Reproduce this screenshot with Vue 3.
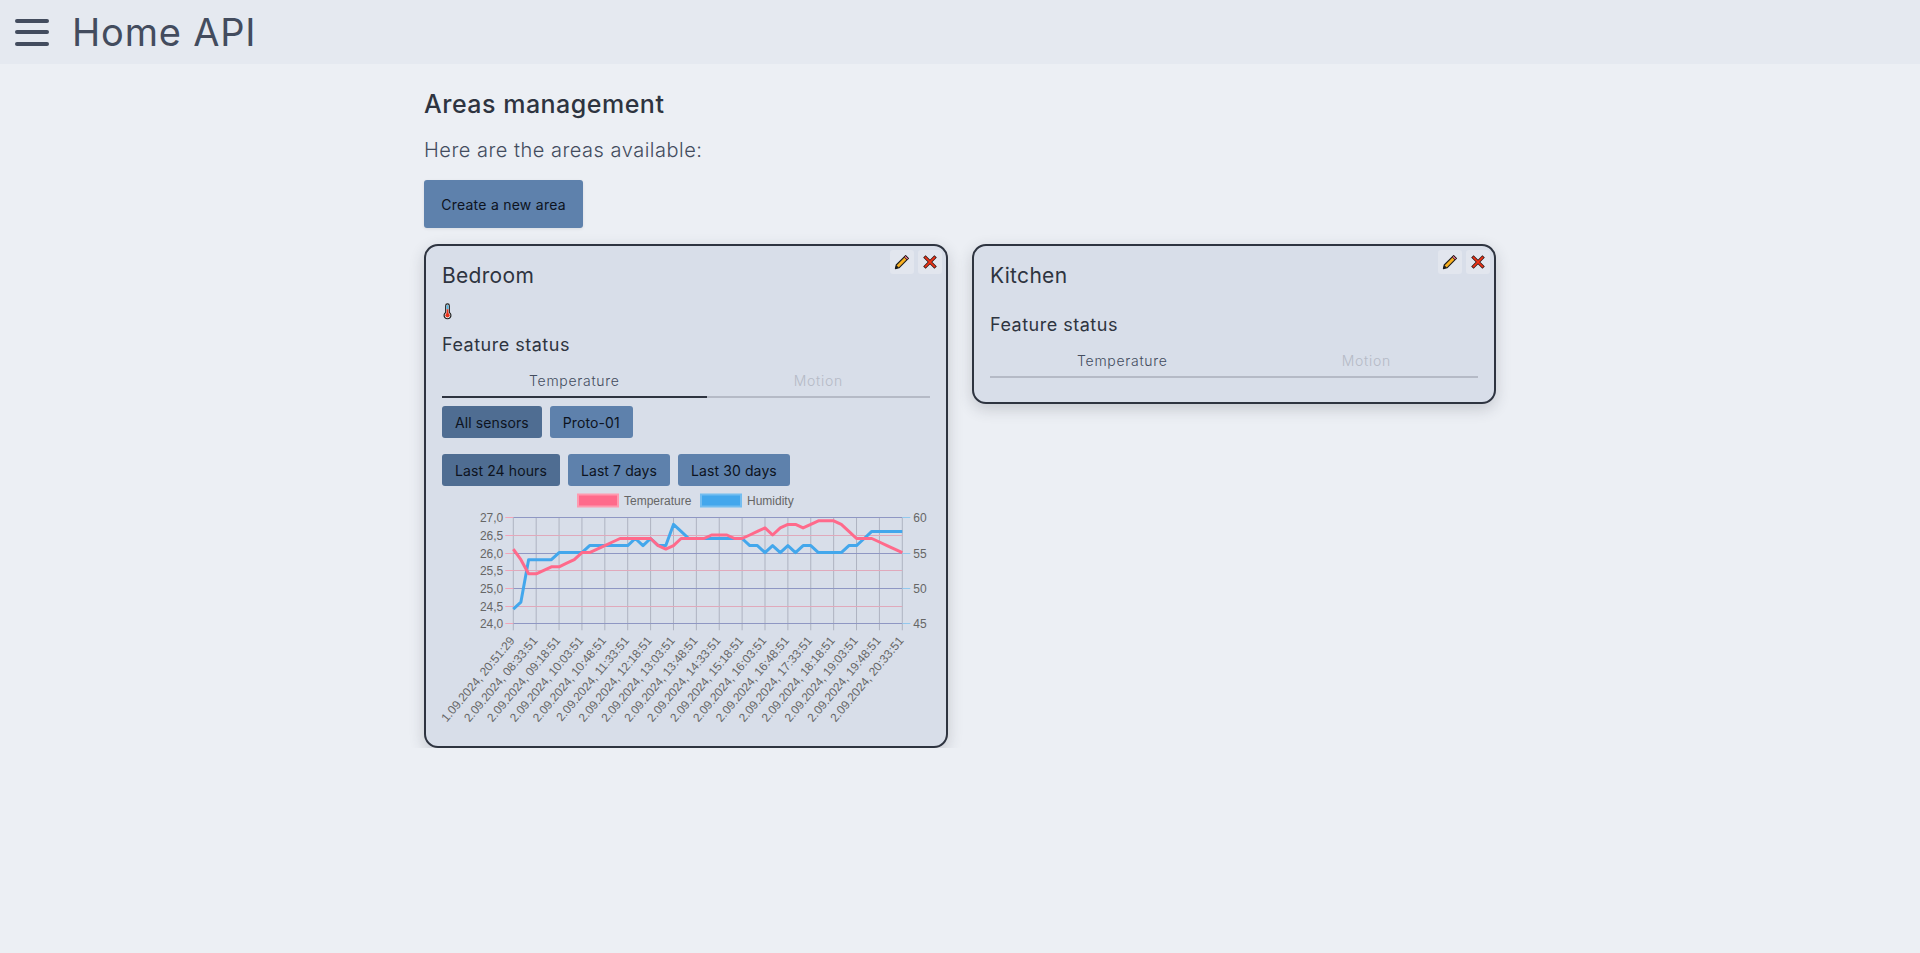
<script setup>
const areas = [
  { name: 'Bedroom', chart: true },
  { name: 'Kitchen', chart: false }
]
const sensors = ['All sensors', 'Proto-01']
const ranges = ['Last 24 hours', 'Last 7 days', 'Last 30 days']

// chart geometry, in canvas pixels
const left = 71.3
const right = 460.3
const top = 33.3
const bottom = 139.3

const temperature = [26.1, 25.8, 25.4, 25.4, 25.5, 25.6, 25.6, 25.7, 25.8, 26, 26, 26.1, 26.2, 26.3, 26.4, 26.4, 26.4, 26.4, 26.4, 26.2, 26.1, 26.2, 26.4, 26.4, 26.4, 26.4, 26.5, 26.5, 26.5, 26.4, 26.4, 26.5, 26.6, 26.7, 26.5, 26.7, 26.8, 26.8, 26.7, 26.8, 26.9, 26.9, 26.9, 26.8, 26.6, 26.4, 26.4, 26.4, 26.3, 26.2, 26.1, 26]
const humidity = [47, 48, 54, 54, 54, 54, 55, 55, 55, 55, 56, 56, 56, 56, 56, 56, 57, 56, 57, 56, 56, 59, 58, 57, 57, 57, 57, 57, 57, 57, 57, 56, 56, 55, 56, 55, 56, 55, 56, 56, 55, 55, 55, 55, 56, 56, 57, 58, 58, 58, 58, 58]

const stepX = (right - left) / 51
const points = (data, min, max) => data
  .map((v, i) => `${(left + i * stepX).toFixed(1)},${(bottom - ((v - min) / (max - min)) * (bottom - top)).toFixed(1)}`)
  .join(' ')
const tempLine = points(temperature, 24, 27)
const humLine = points(humidity, 45, 60)

const times = ['08:33:51', '09:18:51', '10:03:51', '10:48:51', '11:33:51', '12:18:51', '13:03:51', '13:48:51', '14:33:51', '15:18:51', '16:03:51', '16:48:51', '17:33:51', '18:18:51', '19:03:51', '19:48:51', '20:33:51']
const xLabels = ['1.09.2024, 20:51:29', ...times.map((t) => `2.09.2024, ${t}`)]
const xTicks = xLabels.map((label, i) => ({ label, x: left + i * 3 * stepX }))

const leftTicks = ['27,0', '26,5', '26,0', '25,5', '25,0', '24,5', '24,0'].map((label, i) => ({
  label,
  y: Math.round(top + (i * (bottom - top)) / 6) + 0.5,
  shared: i % 2 === 0
}))
const rightTicks = ['60', '55', '50', '45'].map((label, i) => ({
  label,
  y: Math.round(top + (i * (bottom - top)) / 3) + 0.5
}))
</script>

<template>
  <header class="topbar">
    <button class="burger" aria-label="Menu">
      <span></span><span></span><span></span>
    </button>
    <h1>Home API</h1>
  </header>

  <main class="content">
    <h2>Areas management</h2>
    <p class="lead">Here are the areas available:</p>
    <button class="btn create">Create a new area</button>

    <section class="cards">
      <article v-for="area in areas" :key="area.name" class="card">
        <div class="actions">
          <button class="action" aria-label="Edit">
            <svg width="16" height="16" viewBox="0 0 16 16">
              <path d="M11.6 1.6 14.4 4.4 5 13.8 1.4 14.6 2.2 11Z" fill="#f9b020" stroke="#1d1d1d" stroke-width="1.1" stroke-linejoin="round" />
              <path d="M11.6 1.6 14.4 4.4 13 5.8 10.2 3Z" fill="#e8708a" stroke="#1d1d1d" stroke-width=".9" />
              <path d="M2.2 11 5 13.8 1.4 14.6Z" fill="#1d1d1d" />
            </svg>
          </button>
          <button class="action" aria-label="Delete">
            <svg width="16" height="16" viewBox="0 0 16 16">
              <path d="M3.6 3.6 12.4 12.4M12.4 3.6 3.6 12.4" stroke="#2a1512" stroke-width="3.4" stroke-linecap="square" />
              <path d="M3.6 3.6 12.4 12.4M12.4 3.6 3.6 12.4" stroke="#ee3418" stroke-width="1.9" stroke-linecap="square" />
            </svg>
          </button>
        </div>

        <h3 class="area-name">{{ area.name }}</h3>

        <div class="feature-icons" :class="{ empty: !area.chart }">
          <svg v-if="area.chart" width="9" height="17" viewBox="0 0 10 18">
            <path d="M3 2.5a2 2 0 0 1 4 0V10a3.8 3.8 0 1 1-4 0Z" fill="#eef1f5" stroke="#1d1d1d" stroke-width="1.3" />
            <rect x="4.1" y="2" width="1.8" height="4.5" fill="#4db4e6" />
            <rect x="4.1" y="6.5" width="1.8" height="5" fill="#e8321a" />
            <circle cx="5" cy="13.2" r="2.4" fill="#e8321a" />
          </svg>
        </div>

        <h4 class="feature-title">Feature status</h4>

        <div class="tabs" :class="{ selected: area.chart }">
          <div class="tab first">Temperature</div>
          <div class="tab muted">Motion</div>
        </div>

        <template v-if="area.chart">
          <div class="btn-row">
            <button v-for="(s, i) in sensors" :key="s" class="btn small" :class="{ active: i === 0 }">{{ s }}</button>
          </div>
          <div class="btn-row">
            <button v-for="(r, i) in ranges" :key="r" class="btn small" :class="{ active: i === 0 }">{{ r }}</button>
          </div>

          <svg class="chart" width="488" height="244" viewBox="0 0 488 244">
            <!-- legend -->
            <rect x="136" y="10.5" width="40" height="12" fill="#ff6a8b" stroke="#ff9ab0" stroke-width="2" />
            <text x="182" y="20.5" class="tick">Temperature</text>
            <rect x="259" y="10.5" width="40" height="12" fill="#43a7ec" stroke="#73bdf0" stroke-width="2" />
            <text x="305" y="20.5" class="tick">Humidity</text>

            <!-- grid -->
            <line v-for="t in xTicks" :key="t.label" :x1="t.x" :x2="t.x" :y1="top" :y2="bottom + 7" class="grid-x" />
            <line v-for="t in leftTicks" :key="t.label" :x1="left" :x2="right" :y1="t.y" :y2="t.y" :class="t.shared ? 'grid-shared' : 'grid-left'" />
            <line v-for="t in leftTicks" :key="t.label" :x1="left - 8" :x2="left" :y1="t.y" :y2="t.y" class="mark-left" />
            <line v-for="t in rightTicks" :key="t.label" :x1="right" :x2="right + 8" :y1="t.y" :y2="t.y" class="mark-right" />

            <polyline :points="humLine" class="line hum" />
            <polyline :points="tempLine" class="line temp" />

            <!-- axes -->
            <text v-for="t in leftTicks" :key="t.label" :x="left - 10" :y="t.y + 4" text-anchor="end" class="tick">{{ t.label }}</text>
            <text v-for="t in rightTicks" :key="t.label" :x="right + 11" :y="t.y + 4" class="tick">{{ t.label }}</text>
            <text
              v-for="t in xTicks"
              :key="t.label"
              text-anchor="end"
              class="tick"
              :transform="`translate(${t.x + 2} 157) rotate(-50)`"
            >{{ t.label }}</text>
          </svg>
        </template>
      </article>
    </section>
  </main>
</template>

<style>
html,
body {
  background: #eceff4;
}
</style>

<style scoped>
.topbar {
  display: flex;
  align-items: center;
  height: 64px;
  background: #e5e9f0;
  padding-left: 15px;
  box-sizing: border-box;
}

.burger {
  display: flex;
  flex-direction: column;
  justify-content: space-between;
  width: 34px;
  height: 27px;
  padding: 0;
  border: 0;
  background: none;
}

.burger span {
  display: block;
  height: 4px;
  border-radius: 2px;
  background: #434c5e;
}

h1 {
  margin: 0 0 0 23px;
  font: 400 38px "Inter", sans-serif;
  letter-spacing: 0.8px;
  color: #434c5e;
}

.content {
  width: 1072px;
  margin-left: 424px;
  font-family: "Inter", sans-serif;
  color: #2e3440;
}

h2 {
  margin: 0;
  padding-top: 25px;
  font-size: 25px;
  line-height: 30px;
  font-weight: 450;
  letter-spacing: 0.5px;
}

.lead {
  margin: 19px 0 0;
  font-size: 20px;
  line-height: 24px;
  font-weight: 300;
  letter-spacing: 0.5px;
  color: #434c5e;
}

.btn {
  border: 0;
  border-radius: 3px;
  background: #5e81ac;
  color: #0d1320;
  font-family: "Inter", sans-serif;
  font-weight: 400;
  letter-spacing: 0.1px;
}

.create {
  display: block;
  width: 159px;
  height: 48px;
  margin-top: 18px;
  font-size: 14px;
  letter-spacing: 0.25px;
  box-shadow: 0 1px 3px rgba(46, 52, 64, 0.1);
}

.cards {
  display: flex;
  gap: 24px;
  align-items: flex-start;
  margin-top: 16px;
}

.card {
  position: relative;
  flex: 1;
  box-sizing: border-box;
  padding: 16px;
  border: 2px solid #2e3440;
  border-radius: 14px;
  background: #d8dee9;
  box-shadow: 0 5px 15px rgba(46, 52, 64, 0.2);
}

.actions {
  position: absolute;
  top: 4px;
  right: 4px;
  display: flex;
  gap: 4px;
}

.action {
  display: flex;
  align-items: center;
  justify-content: center;
  width: 24px;
  height: 24px;
  padding: 0;
  border: 0;
  border-radius: 3px;
  background: #e2e6ee;
}

.area-name {
  margin: 1px 0 0;
  font-size: 21px;
  line-height: 26px;
  font-weight: 400;
  letter-spacing: 0.3px;
}

.feature-icons {
  display: flex;
  align-items: center;
  height: 18px;
  margin-top: 13px;
  padding-left: 1px;
}

.feature-icons.empty {
  height: 0;
  margin-top: 11px;
}

.feature-title {
  margin: 14px 0 0;
  font-size: 18px;
  line-height: 22px;
  font-weight: 400;
  letter-spacing: 0.5px;
}

.tabs {
  display: flex;
  margin-top: 15px;
  margin-bottom: 8px;
  border-bottom: 2px solid #b5bac6;
}

.tab {
  flex: 1 1 auto;
  padding-bottom: 5px;
  margin-bottom: -2px;
  border-bottom: 2px solid transparent;
  text-align: center;
  font-size: 14px;
  line-height: 20px;
  font-weight: 300;
  letter-spacing: 0.7px;
  color: #434c5e;
}

.tabs.selected .tab.first {
  border-bottom-color: #2e3440;
}

.tab.muted {
  color: #b5bac6;
}

.btn-row {
  display: flex;
  gap: 8px;
}

.btn-row + .btn-row {
  margin-top: 16px;
}

.btn.small {
  height: 32px;
  padding: 0 13px;
  font-size: 14px;
}

.btn.active {
  background: #4f6d92;
}

.chart {
  display: block;
  margin-top: -2px;
  margin-bottom: 2px;
  overflow: visible;
}

.tick {
  font: 12px "Liberation Sans", Arial, sans-serif;
  fill: #666;
}

.grid-x {
  stroke: #aeb3c1;
  stroke-width: 1;
}

.grid-left {
  stroke: #e0a9bb;
  stroke-width: 1;
}

.grid-shared {
  stroke: #8f97c3;
  stroke-width: 1;
}

.mark-left {
  stroke: #f0a5b8;
  stroke-width: 1;
}

.mark-right {
  stroke: #92c8ee;
  stroke-width: 1;
}

.line {
  fill: none;
  stroke-width: 3;
  stroke-linejoin: round;
}

.line.temp {
  stroke: #ff6a8b;
}

.line.hum {
  stroke: #43a7ec;
}
</style>
